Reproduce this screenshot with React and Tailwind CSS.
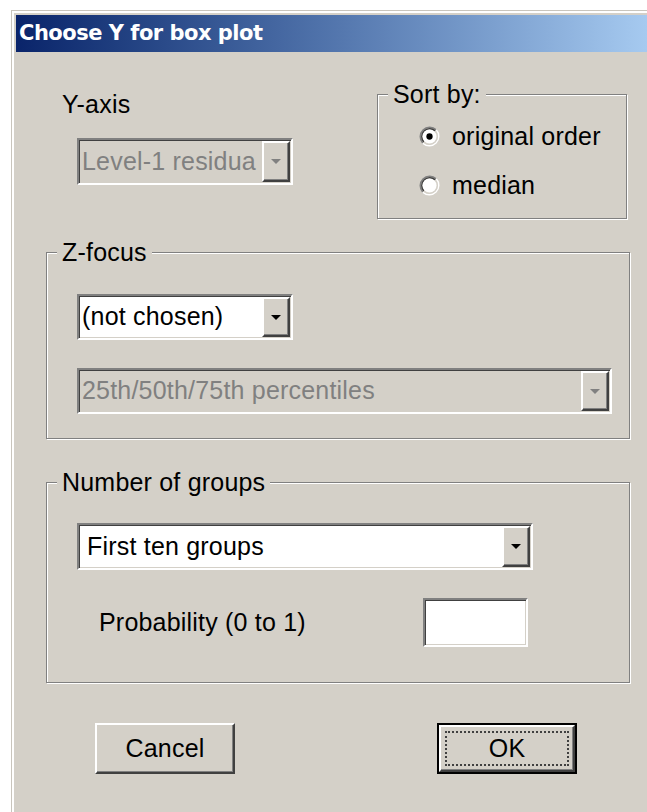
import React from "react";

// classic sunken 3D edge used by combo boxes and edit fields
const sunken =
  "border-2 border-t-[#808080] border-l-[#808080] border-b-white border-r-white";
const sunkenInner =
  "shadow-[inset_1px_1px_0_#404040,inset_-1px_-1px_0_#d4d0c8]";
const raised =
  "border-2 border-t-white border-l-white border-b-[#404040] border-r-[#404040] shadow-[inset_-1px_-1px_0_#808080]";

function DownArrow({ disabled }) {
  return (
    <svg width="10" height="5" viewBox="0 0 10 5">
      <path d="M0 0h10L5 5z" fill={disabled ? "#808080" : "#000"} />
    </svg>
  );
}

function Combo({ value, size, disabled = false, pad = "pl-[2px]" }) {
  return (
    <div className={`${sunken} ${size} ${disabled ? "bg-[#d4d0c8]" : "bg-white"}`}>
      <div className={`${sunkenInner} flex h-full p-[1px]`}>
        <div
          className={`flex-1 flex items-center whitespace-nowrap ${pad} ${
            disabled ? "text-[#808080]" : "text-black"
          }`}
        >
          {value}
        </div>
        <div className={`${raised} w-[28px] h-full flex items-center justify-center bg-[#d4d0c8]`}>
          <DownArrow disabled={disabled} />
        </div>
      </div>
    </div>
  );
}

function Radio({ checked, label }) {
  return (
    <div className="flex items-center gap-[12px] h-[25px]">
      <svg width="21" height="21" viewBox="0 0 20 20">
        <path d="M3.64 16.36A9 9 0 0 1 16.36 3.64" fill="none" stroke="#808080" strokeWidth="1.5" />
        <path d="M16.36 3.64A9 9 0 0 1 3.64 16.36" fill="none" stroke="#fff" strokeWidth="1.5" />
        <path d="M4.7 15.3A7.5 7.5 0 0 1 15.3 4.7" fill="none" stroke="#404040" strokeWidth="1.5" />
        <path d="M15.3 4.7A7.5 7.5 0 0 1 4.7 15.3" fill="none" stroke="#d4d0c8" strokeWidth="1.5" />
        <circle cx="10" cy="10" r="6.7" fill="#fff" />
        {checked && <circle cx="10" cy="10" r="3" fill="#000" />}
      </svg>
      <span>{label}</span>
    </div>
  );
}

function GroupBox({ title, size, children }) {
  return (
    <div
      className={`relative border border-[#808080] shadow-[inset_1px_1px_0_#fff,1px_1px_0_#fff] ${size}`}
    >
      <span className="absolute left-[10px] top-[-13px] px-[5px] bg-[#d4d0c8] leading-none">
        {title}
      </span>
      {children}
    </div>
  );
}

export default function App() {
  return (
    <div className="w-[647px] h-[812px] overflow-hidden bg-white">
      <div className="ml-[11px] mt-[10px] w-[636px] h-[820px] border-l border-t border-[#c9c5bd]">
        <div className="h-full border-l-2 border-t-2 border-white bg-[#d4d0c8] pl-[2px] pt-[2px] font-['Liberation_Sans',Arial,sans-serif] text-[25px] tracking-[0.2px] text-black">
          {/* title bar */}
          <div className="h-[37px] flex items-center pl-[3px] bg-linear-to-r from-[#0a246a] to-[#a6caf0]">
            <span className="font-['DejaVu_Sans',sans-serif] font-bold text-[21px] tracking-[-0.5px] text-white leading-none">
              Choose Y for box plot
            </span>
          </div>

          {/* Y-axis + sort order */}
          <div className="flex">
            <div className="w-[361px] pl-[46px] pt-[40px]">
              <div className="leading-none h-[25px]">Y-axis</div>
              <div className="ml-[15px] mt-[21px]">
                <Combo value="Level-1 residua" size="w-[216px] h-[47px]" disabled />
              </div>
            </div>
            <div className="mt-[42px]">
              <GroupBox title="Sort by:" size="w-[250px] h-[125px]">
                <div className="pt-[29px] pl-[41px] flex flex-col gap-[24px]">
                  <Radio checked label="original order" />
                  <Radio label="median" />
                </div>
              </GroupBox>
            </div>
          </div>

          {/* Z-focus */}
          <div className="ml-[30px] mt-[33px]">
            <GroupBox title="Z-focus" size="w-[584px] h-[187px]">
              <div className="pl-[30px] pt-[41px]">
                <Combo value="(not chosen)" size="w-[216px] h-[46px]" />
                <div className="mt-[28px]">
                  <Combo
                    value="25th/50th/75th percentiles"
                    size="w-[535px] h-[46px]"
                    disabled
                  />
                </div>
              </div>
            </GroupBox>
          </div>

          {/* Number of groups */}
          <div className="ml-[30px] mt-[43px]">
            <GroupBox title="Number of groups" size="w-[584px] h-[201px]">
              <div className="pl-[30px] pt-[40px]">
                <Combo value="First ten groups" size="w-[456px] h-[47px]" pad="pl-[7px]" />
                <div className="mt-[28px] h-[49px] flex items-center">
                  <span className="ml-[22px] w-[324px]">Probability (0 to 1)</span>
                  <div className={`${sunken} w-[105px] h-[49px] bg-white`}>
                    <div className={`${sunkenInner} h-full`} />
                  </div>
                </div>
              </div>
            </GroupBox>
          </div>

          {/* buttons */}
          <div className="mt-[40px] pl-[79px] flex">
            <button className={`${raised} w-[140px] h-[51px] bg-[#d4d0c8] flex items-center justify-center`}>
              Cancel
            </button>
            <button className="ml-[202px] w-[140px] h-[51px] border-2 border-black">
              <div className={`${raised} h-full bg-[#d4d0c8] p-[4px]`}>
                <div className="h-full border-2 border-dotted border-[#404040] flex items-center justify-center">
                  OK
                </div>
              </div>
            </button>
          </div>
        </div>
      </div>
    </div>
  );
}
